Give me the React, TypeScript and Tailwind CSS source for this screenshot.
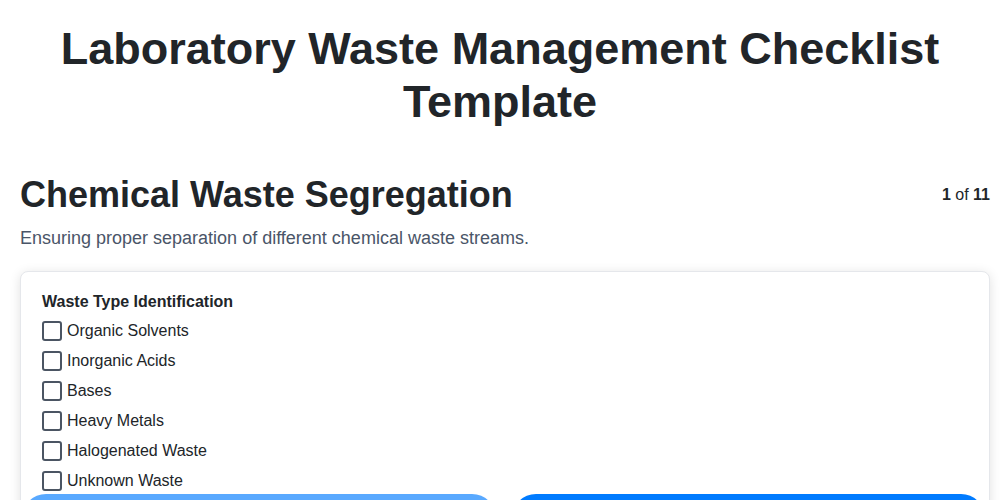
const items = [
  "Organic Solvents",
  "Inorganic Acids",
  "Bases",
  "Heavy Metals",
  "Halogenated Waste",
  "Unknown Waste",
];

export default function App() {
  return (
    <div
      className="min-h-screen bg-white pt-[22px] text-[#212529]"
      style={{ fontFamily: '"Liberation Sans", Arial, sans-serif' }}
    >
      <h1 className="px-5 text-center text-[45px] font-bold leading-[53px]">
        Laboratory Waste Management Checklist Template
      </h1>

      <div className="pl-5 pr-[10px]">
        <div className="mt-[45px] flex items-center justify-between">
          <h2 className="text-4xl font-bold leading-[44px]">Chemical Waste Segregation</h2>
          <span className="text-base">
            <b>1</b> of <b>11</b>
          </span>
        </div>
        <p className="mt-[7px] text-lg leading-7 text-[#4a5568]">
          Ensuring proper separation of different chemical waste streams.
        </p>

        <div className="mt-[19px] rounded-lg border border-[#e5e7eb] bg-white shadow-[0_2px_12px_rgba(0,0,0,0.12)]">
          <div className="px-[21px] pt-[18px]">
            <div className="mb-[2px] text-base font-bold leading-6">Waste Type Identification</div>
            <ul>
              {items.map((item) => (
                <li key={item} className="flex h-[30px] items-center gap-[5px]">
                  <span className="h-5 w-5 rounded-[3px] border-2 border-[#4b5563] bg-white" />
                  <span className="text-base">{item}</span>
                </li>
              ))}
            </ul>
          </div>
          <div className="-mt-[2px] flex gap-4 pb-[3px] pl-[1px] pr-[4px]">
            <button className="h-12 flex-1 rounded-full bg-[#007bff] text-base font-semibold text-white opacity-65">
              Previous
            </button>
            <button className="h-12 flex-1 rounded-full bg-[#007bff] text-base font-semibold text-white">
              Next
            </button>
          </div>
        </div>
      </div>
    </div>
  );
}
